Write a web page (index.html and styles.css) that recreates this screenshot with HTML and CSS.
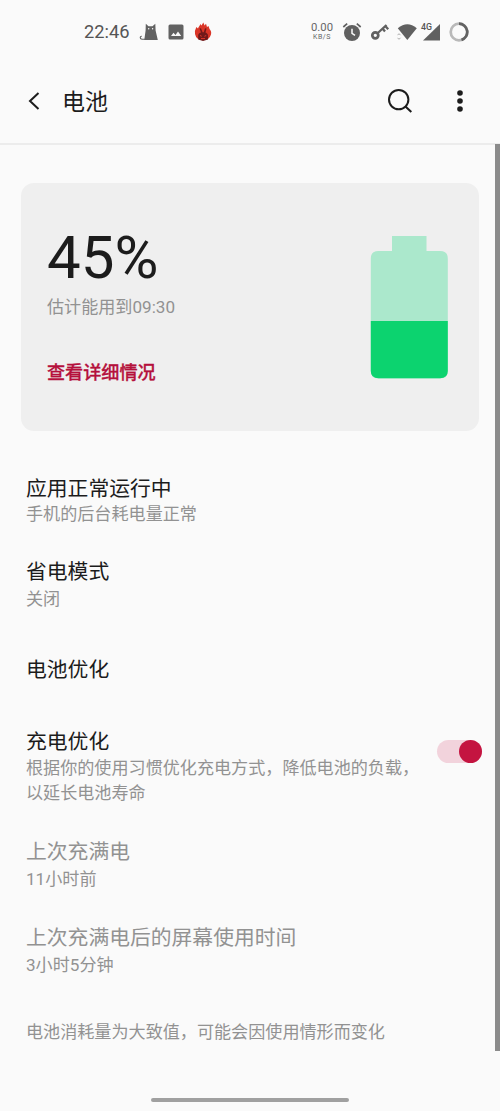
FILE: index.html
```html
<!DOCTYPE html>
<html lang="zh-CN">
<head>
<meta charset="utf-8">
<title>电池</title>
<link rel="stylesheet" href="styles.css">
</head>
<body>
<div class="status">
  <span class="clock">22:46</span>
  <svg class="cat" width="20" height="20" viewBox="0 0 20 20"><path d="M5.300 18 6.600 8.500 6.800 1.800 9.500 4.300h4l2.800-2.500.3 6.700L18.800 18z" fill="#626262"/><path d="M6 17.200H3C.8 17.200.6 14 2.800 14.200" fill="none" stroke="#626262" stroke-width="1.100"/><circle cx="9.700" cy="6.800" r=".7" fill="#fff"/><circle cx="13.600" cy="6.800" r=".7" fill="#fff"/></svg>
  <svg class="photo" width="16" height="16" viewBox="0 0 16 16"><rect x=".5" y=".5" width="15" height="15" rx="1.500" fill="#626262"/><path d="M3 12 5.500 8.800 7.500 11 10 7.500 13.200 12z" fill="#fafafa"/></svg>
  <svg class="flame" width="18" height="20" viewBox="0 0 18 20"><path d="M1 11C.5 8 2 7 2.400 5L4 6.500C4.500 4.500 6 4 6.200 2L7.500 3.500 9.300.5 10.600 3.500 12 1.800 13 5 14.500 4 15.500 7C17 8.500 17.500 10 17 12.500A8.200 7.500 0 0 1 1 12z" fill="#d93527"/><path d="M4.200 17.500V13C4.500 11.500 6 10.500 7 10.500L5.500 6.500 7 6.200 8.600 10.300h1.200L11 6.200l1.500.3L11.500 10.500C13 11 14 12 14 13.500v4L9 19z" fill="#71191a"/><path d="m6 13.500 1.800.8M12.200 13.500l-1.800.8M7 16.500h4" stroke="#d93527"/></svg>
  <span class="speed"><b>0.00</b><small>KB/S</small></span>
  <svg class="alarm" width="20" height="20" viewBox="0 0 20 20"><circle cx="10" cy="11" r="8" fill="#606060"/><path d="M1.300 5 5.200 1.700M18.700 5l-3.900-3.300" stroke="#606060" stroke-width="1.700"/><path d="M10 6.800V11.300L13 13.300" fill="none" stroke="#fafafa" stroke-width="1.500"/></svg>
  <svg class="key" width="20" height="18" viewBox="0 0 20 18"><circle cx="5.300" cy="12.300" r="3" fill="none" stroke="#606060" stroke-width="2.700"/><path d="M7.800 10 16.500 2M12.500 5.500l2.500 3M15.300 3l2.900 3.300" fill="none" stroke="#606060" stroke-width="2.300"/></svg>
  <svg class="wifi" width="20" height="18" viewBox="0 0 20 18"><path d="M.8 5.300Q10.300-2.800 19.800 5.300L10.300 17z" fill="#606060"/><path d="m.5 12.200 1.500-1.500 1.500 1.500M.5 14.800 2 16.300l1.500-1.500" fill="none" stroke="#aaa"/></svg>
  <span class="signal"><svg width="20" height="20" viewBox="0 0 20 20"><path d="M19 2V18.500H2z" fill="#606060"/></svg><i>4G</i></span>
  <svg class="ring" width="20" height="20" viewBox="0 0 20 20"><circle cx="10" cy="10" r="8.300" fill="none" stroke="#b9b9b9" stroke-width="2.700"/><path d="M10 1.700a8.300 8.300 0 0 1 2.500 16.200" fill="none" stroke="#626262" stroke-width="2.700"/></svg>
</div>
<header class="appbar">
  <svg class="back" width="12" height="18" viewBox="0 0 12 18"><path d="M10.500 1 2 9l8.500 8" fill="none" stroke="#1c1c1c" stroke-width="2"/></svg>
  <h1>电池</h1>
  <svg class="search" width="26" height="26" viewBox="0 0 26 26"><circle cx="11.700" cy="11.600" r="9.700" fill="none" stroke="#1c1c1c" stroke-width="2"/><path d="m18.500 18.500 5.800 5.500" stroke="#1c1c1c" stroke-width="2"/></svg>
  <svg class="more" width="6" height="22" viewBox="0 0 6 22"><g fill="#1c1c1c"><circle cx="3" cy="3" r="2.800"/><circle cx="3" cy="11" r="2.800"/><circle cx="3" cy="19" r="2.800"/></g></svg>
</header>
<div class="body">
<main>
  <section class="card">
    <div>
      <div class="percent">45%</div>
      <p class="estimate">估计能用到09:30</p>
      <a class="details">查看详细情况</a>
    </div>
    <svg class="battery" width="78" height="143" viewBox="0 0 78 143"><path d="M22 0H56.500V15H70Q77.800 15 77.800 22.500V135Q77.800 142.500 70 142.500H8.500Q.8 142.500.8 135V22.500Q.8 15 8.500 15H22z" fill="#abe8cc"/><path d="M.8 85h77v50q0 7.300-7.800 7.300H8.500Q.8 142.300.8 135z" fill="#0cd36f"/></svg>
  </section>
  <section class="row health"><h2>应用正常运行中</h2><p>手机的后台耗电量正常</p></section>
  <section class="row saver"><h2>省电模式</h2><p>关闭</p></section>
  <section class="row optimize"><h2>电池优化</h2></section>
  <section class="row charging"><div><h2>充电优化</h2><p>根据你的使用习惯优化充电方式，降低电池的负载，<br>以延长电池寿命</p></div><span class="switch"></span></section>
  <section class="row dim last"><h2>上次充满电</h2><p>11小时前</p></section>
  <section class="row dim screen"><h2>上次充满电后的屏幕使用时间</h2><p>3小时5分钟</p></section>
  <p class="note">电池消耗量为大致值，可能会因使用情形而变化</p>
</main>
<div class="scrollbar"></div>
</div>
<div class="home"></div>
</body>
</html>
```
FILE: styles.css
```css
* { box-sizing: border-box; }
body {
  margin: 0;
  height: 1111px;
  overflow: hidden;
  background: #fafafa;
  color: #1c1c1c;
  font-family: Roboto, "Noto Sans CJK SC", sans-serif;
}
h1, h2, p { margin: 0; font-weight: 400; }
svg { display: block; flex: none; }
.status {
  display: flex;
  align-items: center;
  height: 60px;
  padding: 3px 0 0 84px;
}
.clock { width: 54px; font-size: 18.300px; line-height: 22px; color: #555; }
.cat { margin-left: 1px; }
.photo { margin-left: 9px; }
.flame { margin-left: 10px; }
.speed {
  width: 24px;
  margin-left: 98px;
  color: #666;
  text-align: center;
  white-space: nowrap;
}
.speed b, .speed small { display: block; font-weight: 400; }
.speed b { font-size: 11.300px; line-height: 10px; }
.speed small { font-size: 7px; line-height: 8px; letter-spacing: .6px; }
.alarm { margin-left: 8px; }
.key { margin-left: 8px; }
.wifi { margin-left: 7px; }
.signal { position: relative; margin-left: 4px; }
.signal i {
  position: absolute;
  left: 0;
  top: 1px;
  background: #fafafa;
  color: #555;
  font: 500 8.800px/8px Roboto, sans-serif;
}
.ring { margin-left: 8px; }
.appbar {
  display: flex;
  align-items: center;
  height: 85px;
  padding: 0 37px 2px 28px;
  border-bottom: 2px solid #ececec;
}
.appbar h1 { margin: 4px 0 0 22px; font-size: 23px; line-height: 32px; }
.search { margin-left: auto; }
.more { margin-left: 44px; }
.body { display: flex; justify-content: space-between; height: 906px; }
main { width: 490px; padding: 38px 0 0 21px; }
.scrollbar { width: 5px; height: 907px; margin-top: -1px; background: #8b8b8b; }
.card {
  display: flex;
  justify-content: space-between;
  width: 458px;
  height: 248px;
  padding: 40px 31px 0 26px;
  border-radius: 13px;
  background: #efefef;
}
.percent { font-size: 60px; line-height: 70px; }
.estimate { margin-top: 2px; font-size: 17.100px; line-height: 24px; color: #929292; }
.details {
  display: block;
  margin-top: 42px;
  font-size: 18.100px;
  line-height: 24px;
  font-weight: 500;
  color: #b5103c;
  -webkit-text-stroke: .3px #b5103c;
}
.battery { margin-top: 13px; }
.row { padding-left: 5px; }
.row h2 { font-size: 20.800px; line-height: 26px; }
.row p, .note { font-size: 17.100px; line-height: 25px; color: #929292; }
.health { margin-top: 45px; }
.saver { margin-top: 32px; }
.saver p, .dim p { margin-top: 2px; }
.charging p { margin-top: 1px; }
.optimize { margin-top: 45px; }
.charging { display: flex; justify-content: space-between; margin-top: 46px; padding-right: 8px; white-space: nowrap; }
.switch {
  display: flex;
  justify-content: flex-end;
  flex: none;
  width: 45px;
  height: 23px;
  margin-top: 11px;
  border-radius: 12px;
  background: #f2d3dc;
}
.switch::after { content: ""; width: 23px; height: 23px; border-radius: 50%; background: #c41440; }
.dim h2 { color: #929292; }
.last { margin-top: 33px; }
.screen { margin-top: 33px; }
.note { margin-top: 42px; padding-left: 5px; }
.home { width: 198px; height: 4px; margin: 47px 0 0 151px; border-radius: 2px; background: #a0a0a0; }
```
